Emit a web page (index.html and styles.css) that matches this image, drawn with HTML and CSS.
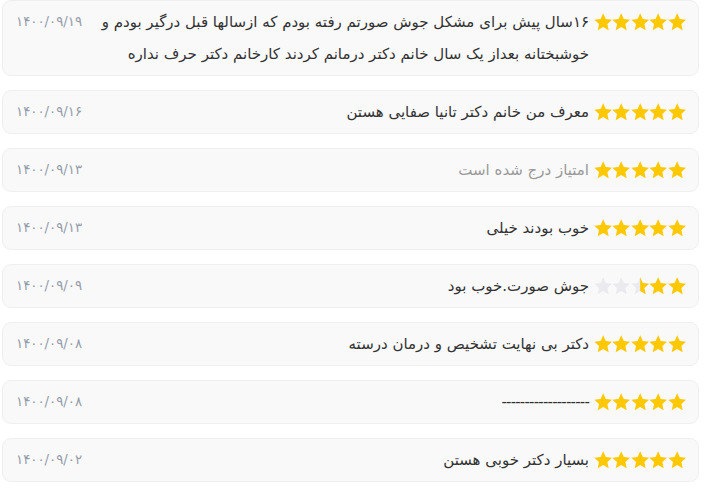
FILE: index.html
```html
<!DOCTYPE html>
<html lang="fa">
<head>
<meta charset="utf-8">
<link rel="stylesheet" href="styles.css">
</head>
<body>
<div class="list" dir="rtl">
  <div class="card">
    <div class="stars">
      <svg viewBox="1.4 1.4 21.2 21.2"><path class="on" d="M12 1.8l3 6.6 7.2.8-5.4 4.9 1.5 7.1L12 17.6l-6.3 3.6 1.5-7.1L1.8 9.2 9 8.4z"/></svg>
      <svg viewBox="1.4 1.4 21.2 21.2"><path class="on" d="M12 1.8l3 6.6 7.2.8-5.4 4.9 1.5 7.1L12 17.6l-6.3 3.6 1.5-7.1L1.8 9.2 9 8.4z"/></svg>
      <svg viewBox="1.4 1.4 21.2 21.2"><path class="on" d="M12 1.8l3 6.6 7.2.8-5.4 4.9 1.5 7.1L12 17.6l-6.3 3.6 1.5-7.1L1.8 9.2 9 8.4z"/></svg>
      <svg viewBox="1.4 1.4 21.2 21.2"><path class="on" d="M12 1.8l3 6.6 7.2.8-5.4 4.9 1.5 7.1L12 17.6l-6.3 3.6 1.5-7.1L1.8 9.2 9 8.4z"/></svg>
      <svg viewBox="1.4 1.4 21.2 21.2"><path class="on" d="M12 1.8l3 6.6 7.2.8-5.4 4.9 1.5 7.1L12 17.6l-6.3 3.6 1.5-7.1L1.8 9.2 9 8.4z"/></svg>
    </div>
    <p class="text">۱۶سال پیش برای مشکل جوش صورتم رفته بودم که ازسالها قبل درگیر بودم و خوشبختانه بعداز یک سال خانم دکتر درمانم کردند کارخانم دکتر حرف نداره</p>
    <span class="date">۱۴۰۰/۰۹/۱۹</span>
  </div>
  <div class="card">
    <div class="stars">
      <svg viewBox="1.4 1.4 21.2 21.2"><path class="on" d="M12 1.8l3 6.6 7.2.8-5.4 4.9 1.5 7.1L12 17.6l-6.3 3.6 1.5-7.1L1.8 9.2 9 8.4z"/></svg>
      <svg viewBox="1.4 1.4 21.2 21.2"><path class="on" d="M12 1.8l3 6.6 7.2.8-5.4 4.9 1.5 7.1L12 17.6l-6.3 3.6 1.5-7.1L1.8 9.2 9 8.4z"/></svg>
      <svg viewBox="1.4 1.4 21.2 21.2"><path class="on" d="M12 1.8l3 6.6 7.2.8-5.4 4.9 1.5 7.1L12 17.6l-6.3 3.6 1.5-7.1L1.8 9.2 9 8.4z"/></svg>
      <svg viewBox="1.4 1.4 21.2 21.2"><path class="on" d="M12 1.8l3 6.6 7.2.8-5.4 4.9 1.5 7.1L12 17.6l-6.3 3.6 1.5-7.1L1.8 9.2 9 8.4z"/></svg>
      <svg viewBox="1.4 1.4 21.2 21.2"><path class="on" d="M12 1.8l3 6.6 7.2.8-5.4 4.9 1.5 7.1L12 17.6l-6.3 3.6 1.5-7.1L1.8 9.2 9 8.4z"/></svg>
    </div>
    <p class="text">معرف من خانم دکتر تانیا صفایی هستن</p>
    <span class="date">۱۴۰۰/۰۹/۱۶</span>
  </div>
  <div class="card">
    <div class="stars">
      <svg viewBox="1.4 1.4 21.2 21.2"><path class="on" d="M12 1.8l3 6.6 7.2.8-5.4 4.9 1.5 7.1L12 17.6l-6.3 3.6 1.5-7.1L1.8 9.2 9 8.4z"/></svg>
      <svg viewBox="1.4 1.4 21.2 21.2"><path class="on" d="M12 1.8l3 6.6 7.2.8-5.4 4.9 1.5 7.1L12 17.6l-6.3 3.6 1.5-7.1L1.8 9.2 9 8.4z"/></svg>
      <svg viewBox="1.4 1.4 21.2 21.2"><path class="on" d="M12 1.8l3 6.6 7.2.8-5.4 4.9 1.5 7.1L12 17.6l-6.3 3.6 1.5-7.1L1.8 9.2 9 8.4z"/></svg>
      <svg viewBox="1.4 1.4 21.2 21.2"><path class="on" d="M12 1.8l3 6.6 7.2.8-5.4 4.9 1.5 7.1L12 17.6l-6.3 3.6 1.5-7.1L1.8 9.2 9 8.4z"/></svg>
      <svg viewBox="1.4 1.4 21.2 21.2"><path class="on" d="M12 1.8l3 6.6 7.2.8-5.4 4.9 1.5 7.1L12 17.6l-6.3 3.6 1.5-7.1L1.8 9.2 9 8.4z"/></svg>
    </div>
    <p class="text muted">امتیاز درج شده است</p>
    <span class="date">۱۴۰۰/۰۹/۱۳</span>
  </div>
  <div class="card">
    <div class="stars">
      <svg viewBox="1.4 1.4 21.2 21.2"><path class="on" d="M12 1.8l3 6.6 7.2.8-5.4 4.9 1.5 7.1L12 17.6l-6.3 3.6 1.5-7.1L1.8 9.2 9 8.4z"/></svg>
      <svg viewBox="1.4 1.4 21.2 21.2"><path class="on" d="M12 1.8l3 6.6 7.2.8-5.4 4.9 1.5 7.1L12 17.6l-6.3 3.6 1.5-7.1L1.8 9.2 9 8.4z"/></svg>
      <svg viewBox="1.4 1.4 21.2 21.2"><path class="on" d="M12 1.8l3 6.6 7.2.8-5.4 4.9 1.5 7.1L12 17.6l-6.3 3.6 1.5-7.1L1.8 9.2 9 8.4z"/></svg>
      <svg viewBox="1.4 1.4 21.2 21.2"><path class="on" d="M12 1.8l3 6.6 7.2.8-5.4 4.9 1.5 7.1L12 17.6l-6.3 3.6 1.5-7.1L1.8 9.2 9 8.4z"/></svg>
      <svg viewBox="1.4 1.4 21.2 21.2"><path class="on" d="M12 1.8l3 6.6 7.2.8-5.4 4.9 1.5 7.1L12 17.6l-6.3 3.6 1.5-7.1L1.8 9.2 9 8.4z"/></svg>
    </div>
    <p class="text">خوب بودند خیلی</p>
    <span class="date">۱۴۰۰/۰۹/۱۳</span>
  </div>
  <div class="card">
    <div class="stars">
      <svg viewBox="1.4 1.4 21.2 21.2"><path class="on" d="M12 1.8l3 6.6 7.2.8-5.4 4.9 1.5 7.1L12 17.6l-6.3 3.6 1.5-7.1L1.8 9.2 9 8.4z"/></svg>
      <svg viewBox="1.4 1.4 21.2 21.2"><path class="on" d="M12 1.8l3 6.6 7.2.8-5.4 4.9 1.5 7.1L12 17.6l-6.3 3.6 1.5-7.1L1.8 9.2 9 8.4z"/></svg>
      <svg viewBox="1.4 1.4 21.2 21.2">
        <defs><clipPath id="righthalf"><rect x="12" y="0" width="12" height="24"/></clipPath></defs>
        <path class="off" d="M12 1.8l3 6.6 7.2.8-5.4 4.9 1.5 7.1L12 17.6l-6.3 3.6 1.5-7.1L1.8 9.2 9 8.4z"/>
        <path class="on" clip-path="url(#righthalf)" d="M12 1.8l3 6.6 7.2.8-5.4 4.9 1.5 7.1L12 17.6l-6.3 3.6 1.5-7.1L1.8 9.2 9 8.4z"/>
      </svg>
      <svg viewBox="1.4 1.4 21.2 21.2"><path class="off" d="M12 1.8l3 6.6 7.2.8-5.4 4.9 1.5 7.1L12 17.6l-6.3 3.6 1.5-7.1L1.8 9.2 9 8.4z"/></svg>
      <svg viewBox="1.4 1.4 21.2 21.2"><path class="off" d="M12 1.8l3 6.6 7.2.8-5.4 4.9 1.5 7.1L12 17.6l-6.3 3.6 1.5-7.1L1.8 9.2 9 8.4z"/></svg>
    </div>
    <p class="text">جوش صورت.خوب بود</p>
    <span class="date">۱۴۰۰/۰۹/۰۹</span>
  </div>
  <div class="card">
    <div class="stars">
      <svg viewBox="1.4 1.4 21.2 21.2"><path class="on" d="M12 1.8l3 6.6 7.2.8-5.4 4.9 1.5 7.1L12 17.6l-6.3 3.6 1.5-7.1L1.8 9.2 9 8.4z"/></svg>
      <svg viewBox="1.4 1.4 21.2 21.2"><path class="on" d="M12 1.8l3 6.6 7.2.8-5.4 4.9 1.5 7.1L12 17.6l-6.3 3.6 1.5-7.1L1.8 9.2 9 8.4z"/></svg>
      <svg viewBox="1.4 1.4 21.2 21.2"><path class="on" d="M12 1.8l3 6.6 7.2.8-5.4 4.9 1.5 7.1L12 17.6l-6.3 3.6 1.5-7.1L1.8 9.2 9 8.4z"/></svg>
      <svg viewBox="1.4 1.4 21.2 21.2"><path class="on" d="M12 1.8l3 6.6 7.2.8-5.4 4.9 1.5 7.1L12 17.6l-6.3 3.6 1.5-7.1L1.8 9.2 9 8.4z"/></svg>
      <svg viewBox="1.4 1.4 21.2 21.2"><path class="on" d="M12 1.8l3 6.6 7.2.8-5.4 4.9 1.5 7.1L12 17.6l-6.3 3.6 1.5-7.1L1.8 9.2 9 8.4z"/></svg>
    </div>
    <p class="text">دکتر بی نهایت تشخیص و درمان درسته</p>
    <span class="date">۱۴۰۰/۰۹/۰۸</span>
  </div>
  <div class="card">
    <div class="stars">
      <svg viewBox="1.4 1.4 21.2 21.2"><path class="on" d="M12 1.8l3 6.6 7.2.8-5.4 4.9 1.5 7.1L12 17.6l-6.3 3.6 1.5-7.1L1.8 9.2 9 8.4z"/></svg>
      <svg viewBox="1.4 1.4 21.2 21.2"><path class="on" d="M12 1.8l3 6.6 7.2.8-5.4 4.9 1.5 7.1L12 17.6l-6.3 3.6 1.5-7.1L1.8 9.2 9 8.4z"/></svg>
      <svg viewBox="1.4 1.4 21.2 21.2"><path class="on" d="M12 1.8l3 6.6 7.2.8-5.4 4.9 1.5 7.1L12 17.6l-6.3 3.6 1.5-7.1L1.8 9.2 9 8.4z"/></svg>
      <svg viewBox="1.4 1.4 21.2 21.2"><path class="on" d="M12 1.8l3 6.6 7.2.8-5.4 4.9 1.5 7.1L12 17.6l-6.3 3.6 1.5-7.1L1.8 9.2 9 8.4z"/></svg>
      <svg viewBox="1.4 1.4 21.2 21.2"><path class="on" d="M12 1.8l3 6.6 7.2.8-5.4 4.9 1.5 7.1L12 17.6l-6.3 3.6 1.5-7.1L1.8 9.2 9 8.4z"/></svg>
    </div>
    <p class="text dashes">-------------------</p>
    <span class="date">۱۴۰۰/۰۹/۰۸</span>
  </div>
  <div class="card">
    <div class="stars">
      <svg viewBox="1.4 1.4 21.2 21.2"><path class="on" d="M12 1.8l3 6.6 7.2.8-5.4 4.9 1.5 7.1L12 17.6l-6.3 3.6 1.5-7.1L1.8 9.2 9 8.4z"/></svg>
      <svg viewBox="1.4 1.4 21.2 21.2"><path class="on" d="M12 1.8l3 6.6 7.2.8-5.4 4.9 1.5 7.1L12 17.6l-6.3 3.6 1.5-7.1L1.8 9.2 9 8.4z"/></svg>
      <svg viewBox="1.4 1.4 21.2 21.2"><path class="on" d="M12 1.8l3 6.6 7.2.8-5.4 4.9 1.5 7.1L12 17.6l-6.3 3.6 1.5-7.1L1.8 9.2 9 8.4z"/></svg>
      <svg viewBox="1.4 1.4 21.2 21.2"><path class="on" d="M12 1.8l3 6.6 7.2.8-5.4 4.9 1.5 7.1L12 17.6l-6.3 3.6 1.5-7.1L1.8 9.2 9 8.4z"/></svg>
      <svg viewBox="1.4 1.4 21.2 21.2"><path class="on" d="M12 1.8l3 6.6 7.2.8-5.4 4.9 1.5 7.1L12 17.6l-6.3 3.6 1.5-7.1L1.8 9.2 9 8.4z"/></svg>
    </div>
    <p class="text">بسیار دکتر خوبی هستن</p>
    <span class="date">۱۴۰۰/۰۹/۰۲</span>
  </div>
</div>
</body>
</html>
```

FILE: styles.css
```css
html, body {
  margin: 0;
  padding: 0;
  background: #ffffff;
}

body {
  font-family: "DejaVu Sans", "Noto Sans", sans-serif;
  color: #333333;
}

.list {
  width: 697px;
  margin-left: 2px;
  display: flex;
  flex-direction: column;
  gap: 14px;
}

.card {
  display: flex;
  align-items: flex-start;
  gap: 5px;
  padding: 5px 12px 5px 13px;
  background: #f9f9f9;
  border: 1px solid #efefef;
  border-radius: 9px;
}

.stars {
  display: flex;
  align-items: center;
  gap: 0;
  height: 32px;
  flex-shrink: 0;
}

.stars svg {
  width: 18.4px;
  height: 18.4px;
  display: block;
}

.on { fill: #ffc800; }
.off { fill: #ebebef; }

.text {
  flex: 1;
  margin: 0;
  font-size: 15px;
  line-height: 32px;
  color: #333333;
}

.text.muted {
  color: #9a9a9a;
}

.text.dashes {
  letter-spacing: -0.8px;
}

.date {
  width: 70px;
  flex-shrink: 0;
  font-size: 13.3px;
  line-height: 31px;
  color: #949cab;
  text-align: left;
}
```
